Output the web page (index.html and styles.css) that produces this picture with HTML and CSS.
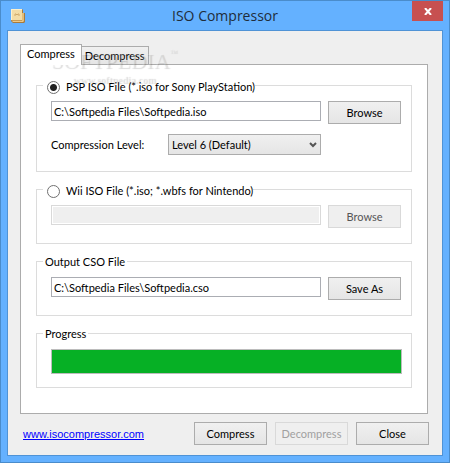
FILE: index.html
```html
<!DOCTYPE html>
<html lang="en">

<head>
    <meta charset="UTF-8">
    <meta name="viewport" content="width=device-width, initial-scale=1.0">
    <title>ISO Compressor</title>
    <link rel="stylesheet" href="styles.css">
</head>

<body>
    <div class="window">
        <header class="titlebar">
            <svg class="app-icon" width="16" height="16" viewBox="0 0 16 16">
                <path d="M2 1h10l1 1v3h2v9l-1 1H3l-2-2V2z" fill="#a87a3c" />
                <path d="M1 1h11v11H1z" fill="#f3dca6" />
                <path d="M12 5h2v8h-2z" fill="#e2bd78" />
                <path d="M1 12h11v1H2z" fill="#c79a54" />
                <path d="M2 13h11l1 1H3z" fill="#ecc988" />
                <path d="M1 1h11v1H2v10H1z" fill="#fdf0cc" />
                <path d="M5 8V6h1l1 1 1-1h1v2" fill="none" stroke="#d0a868" />
            </svg>
            <h1 class="title">ISO Compressor</h1>
            <button class="close" aria-label="Close window">
                <svg width="8" height="7" viewBox="0 0 8 7">
                    <path d="M1 0l6 7M7 0L1 7" stroke="#fff" stroke-width="2" />
                </svg>
            </button>
        </header>

        <main class="client">
            <div class="tabs" role="tablist">
                <button class="tab active" role="tab" aria-selected="true">Compress</button>
                <button class="tab" role="tab" aria-selected="false">Decompress</button>
            </div>

            <div class="panel" role="tabpanel">
                <fieldset class="group level-group">
                    <legend class="choice">
                        <input type="radio" name="source" id="psp" checked>
                        <label for="psp">PSP ISO File (*.iso for Sony PlayStation)</label>
                    </legend>
                    <div class="row">
                        <input class="path" type="text" aria-label="PSP ISO file" value="C:\Softpedia Files\Softpedia.iso">
                        <button class="btn">Browse</button>
                    </div>
                    <div class="row level">
                        <label for="level">Compression Level:</label>
                        <div class="drop">
                            <select id="level">
                                <option>Level 6 (Default)</option>
                            </select>
                            <svg class="arrow" width="8" height="6" viewBox="0 0 8 6">
                                <path d="M1 1l3 3 3-3" fill="none" stroke="#555" stroke-width="2" />
                            </svg>
                        </div>
                    </div>
                </fieldset>

                <fieldset class="group">
                    <legend class="choice">
                        <input type="radio" name="source" id="wii">
                        <label for="wii">Wii ISO File (*.iso; *.wbfs for Nintendo)</label>
                    </legend>
                    <div class="row">
                        <input class="path" type="text" aria-label="Wii ISO file" disabled>
                        <button class="btn dim" disabled>Browse</button>
                    </div>
                </fieldset>

                <fieldset class="group">
                    <legend>Output CSO File</legend>
                    <div class="row">
                        <input class="path" type="text" aria-label="Output CSO file" value="C:\Softpedia Files\Softpedia.cso">
                        <button class="btn">Save As</button>
                    </div>
                </fieldset>

                <fieldset class="group progress-group">
                    <legend>Progress</legend>
                    <progress value="100" max="100" aria-label="Progress"></progress>
                </fieldset>
            </div>

            <footer class="footer">
                <a class="site" href="#">www.isocompressor.com</a>
                <button class="btn">Compress</button>
                <button class="btn" disabled>Decompress</button>
                <button class="btn">Close</button>
            </footer>
        </main>

        <div class="watermark">
            <div class="mark">SOFTPEDIA<sup>™</sup></div>
            <div class="mark-url">www.softpedia.com</div>
        </div>
    </div>
</body>

</html>
```
FILE: styles.css
```css
* {
    box-sizing: border-box;
}

body {
    margin: 0;
    font: 11px/14px Lato, "Liberation Sans", sans-serif;
    color: #000;
}

button,
input,
select {
    font: inherit;
    color: inherit;
    margin: 0;
}

.window {
    position: relative;
    display: flex;
    flex-direction: column;
    min-height: 100vh;
    padding: 0 6px 6px;
    border: 1px solid #4a8ccb;
    background: #64b1ff;
}

/* title bar */
.titlebar {
    display: grid;
    grid-template-columns: 31px 1fr 31px;
    height: 29px;
}

.app-icon {
    margin: 7px 0 0 3px;
}

.title {
    margin: 0;
    padding-top: 4px;
    font: 14px/22px "Open Sans", "Noto Sans", sans-serif;
    color: #1f2d3a;
    text-align: center;
}

.close {
    display: flex;
    align-items: center;
    justify-content: center;
    height: 20px;
    padding: 0;
    border: 0;
    background: #c75050;
}

.client {
    flex: 1;
    display: flex;
    flex-direction: column;
    padding: 13px 13px 10px 12px;
    border: 1px solid #4f93d6;
    background: #efefef;
}

/* tabs */
.tabs {
    display: flex;
    align-items: flex-end;
}

.tab {
    height: 18px;
    padding: 0 3px;
    border: 1px solid #acacac;
    border-width: 1px 1px 0 0;
    background: linear-gradient(#f0f0f0, #e5e5e5);
}

.tab.active {
    height: 21px;
    margin-bottom: -1px;
    padding: 0 6px 2px;
    border-left-width: 1px;
    background: #fff;
    z-index: 1;
}

.panel {
    flex: 1;
    margin-right: 1px;
    padding: 12px 15px;
    border: 1px solid #acacac;
    background: #fff;
}

/* group boxes */
.group {
    min-width: 0;
    margin: 0 0 9px;
    padding: 7px 10px 15px 14px;
    border: 1px solid #dcdcdc;
}

.group legend {
    height: 17px;
    margin-left: -8px;
    padding: 2px 2px 1px;
}

.group .choice {
    display: flex;
    align-items: center;
    gap: 6px;
    padding: 3px 0 0 4px;
}

.level-group {
    padding-bottom: 16px;
}

.progress-group {
    margin: 0;
    padding: 7px 9px 13px 14px;
}

input[type="radio"] {
    appearance: none;
    width: 13px;
    height: 13px;
    border: 1px solid #707070;
    border-radius: 50%;
    background: #fff;
}

input[type="radio"]:checked {
    background: radial-gradient(circle, #222 3px, #fff 4px);
}

.row {
    display: flex;
    align-items: flex-start;
    gap: 7px;
}

.path {
    flex: 1;
    min-width: 0;
    height: 20px;
    padding: 0 2px;
    border: 1px solid #abadb3;
    background: #fff;
}

.path:disabled {
    border-color: #d9d9d9;
    background: #efefef;
    box-shadow: inset 0 0 0 1px #fff;
}

.btn {
    width: 73px;
    height: 23px;
    padding: 0;
    border: 1px solid #acacac;
    background: linear-gradient(#f0f0f0, #e5e5e5);
}

.btn:disabled {
    border-color: #d9d9d9;
    background: #efefef;
    color: #a0a0a0;
}

.btn.dim {
    color: #555;
}

.level {
    align-items: center;
    justify-content: space-between;
    margin-top: 10px;
    padding-right: 80px;
}

.drop {
    position: relative;
    width: 153px;
}

.drop select {
    display: block;
    appearance: none;
    width: 100%;
    height: 21px;
    padding: 0 3px;
    border: 1px solid #acacac;
    border-radius: 0;
    background: linear-gradient(#f0f0f0, #e5e5e5);
}

.arrow {
    position: absolute;
    top: 8px;
    right: 4px;
    pointer-events: none;
}

progress {
    appearance: none;
    display: block;
    width: 100%;
    height: 25px;
    border: 1px solid #bcbcbc;
    background: #e6e6e6;
}

progress::-webkit-progress-bar {
    background: #e6e6e6;
}

progress::-webkit-progress-value {
    background: #06b025;
}

/* bottom buttons */
.footer {
    display: flex;
    align-items: center;
    gap: 8px;
    margin-top: 8px;
    padding-left: 3px;
}

.site {
    margin-right: auto;
    font-family: "Liberation Sans", Arial, sans-serif;
    color: #00f;
}

/* embossed mark lying over the tabs */
.watermark {
    position: absolute;
    top: 48px;
    left: 50px;
    color: rgba(255, 255, 255, .2);
    text-shadow: 1px 1px 1px rgba(0, 0, 0, .15);
    pointer-events: none;
}

.mark {
    font: 22px/24px "Liberation Serif", serif;
}

.mark sup {
    font-size: 8px;
    line-height: 8px;
    vertical-align: top;
}

.mark-url {
    font: bold 10px/14px "Liberation Serif", serif;
    text-align: center;
}
```
